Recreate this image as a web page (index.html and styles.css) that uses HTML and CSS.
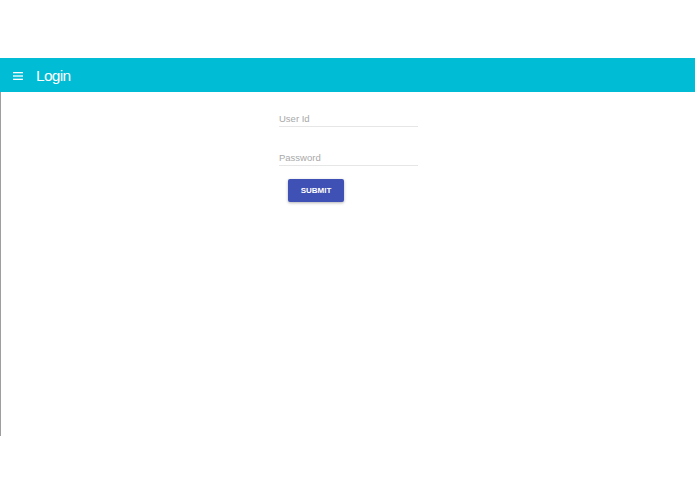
FILE: index.html
```html
<!DOCTYPE html>
<html>
<head>
<meta charset="utf-8">
<link rel="stylesheet" href="styles.css">
</head>
<body>
<div class="top-space"></div>
<header class="appbar">
  <span class="menu-icon">
    <svg width="10" height="8" viewBox="0 0 10 8"><rect x="0" y="0" width="10" height="1.3" fill="#fff"/><rect x="0" y="3.35" width="10" height="1.3" fill="#fff"/><rect x="0" y="6.7" width="10" height="1.3" fill="#fff"/></svg>
  </span>
  <span class="title">Login</span>
</header>
<main class="content">
  <form class="login-form">
    <input class="field" type="text" placeholder="User Id">
    <input class="field" type="password" placeholder="Password">
    <button type="button" class="submit">SUBMIT</button>
  </form>
</main>
</body>
</html>
```
FILE: styles.css
```css
html, body { margin: 0; padding: 0; background: #fff; }
body { font-family: "Liberation Sans", Arial, sans-serif; }
.top-space { height: 58px; }
.appbar {
  height: 34px;
  background: #00bcd4;
  display: flex;
  align-items: center;
  color: #fff;
}
.menu-icon { display: flex; margin-left: 13px; margin-top: 1px; }
.title { margin-left: 13px; font-size: 15.5px; letter-spacing: -0.7px; margin-top: 1px; }
.content {
  height: 344px;
  border-left: 1px solid #9e9e9e;
  display: flex;
  justify-content: center;
}
.login-form {
  width: 139px;
  margin: 0 0 0 1px;
  padding-top: 20px;
  display: flex;
  flex-direction: column;
}
.field {
  display: block;
  width: 100%;
  box-sizing: border-box;
  border: none;
  border-bottom: 1px solid #e6e6e6;
  outline: none;
  padding: 0 0 2px 0;
  margin: 0;
  font-family: "Liberation Sans", Arial, sans-serif;
  font-size: 9.5px;
  height: 15px;
  background: transparent;
}
.field + .field { margin-top: 24px; }
.field::placeholder { color: #a8a8a8; }
.submit {
  align-self: flex-start;
  margin-left: 9px;
  margin-top: 13px;
  width: 56px;
  height: 23px;
  background: #3f51b5;
  color: #fff;
  border: none;
  border-radius: 2px;
  font-family: "Liberation Sans", Arial, sans-serif;
  font-size: 8px;
  font-weight: bold;
  box-shadow: 0 1px 3px rgba(0,0,0,0.3);
  padding: 0;
}
```
